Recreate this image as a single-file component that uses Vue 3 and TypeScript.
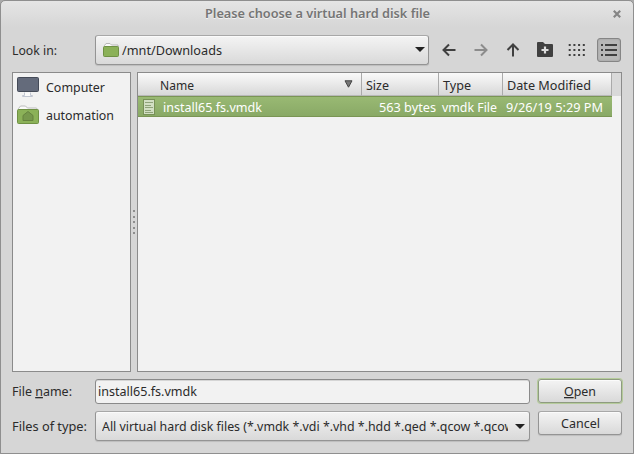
<script setup lang="ts">
import { h, ref } from 'vue'

interface LabelProps {
  text: string
  width: number
  // index of the underlined mnemonic letter
  mnemonic?: number
}

// Text label set to a fixed advance width
const Label = (props: LabelProps) => {
  const { text, width, mnemonic } = props
  const parts = mnemonic === undefined
    ? [text]
    : [
        text.slice(0, mnemonic),
        h('tspan', { 'text-decoration': 'underline' }, text[mnemonic]),
        text.slice(mnemonic + 1),
      ]
  return h('svg', { width, height: 14, overflow: 'visible', fill: 'currentColor', 'xml:space': 'preserve' }, [
    h('text', { x: 0, y: 12, textLength: width, lengthAdjust: 'spacingAndGlyphs' }, parts),
  ])
}
Label.props = ['text', 'width', 'mnemonic']

const fileName = ref('install65.fs.vmdk')
const dots = [0, 4.7, 9.4, 14.1]
</script>

<template>
  <main class="window">
    <header class="titlebar">
      <Label class="title" text="Please choose a virtual hard disk file" :width="225" />
      <svg class="close" width="10" height="10" viewBox="0 0 10 10"><path d="M1.800 1.800 8.200 8.200M8.200 1.800 1.800 8.200" /></svg>
    </header>

    <section class="lookin">
      <Label class="caption" text="Look in:" :width="45" />
      <button class="combo path">
        <svg width="18" height="16" viewBox="0 0 18 16">
          <path d="M2.500 6V3.500L4 1.500h4l1.500 1.500h6.500V5" fill="#fafafa" stroke="#b8b8b8" />
          <rect x="1.500" y="4.500" width="15" height="10" rx="1" fill="#8bb158" stroke="#6f9144" />
        </svg>
        <Label text="/mnt/Downloads" :width="100" />
        <i class="arrow"></i>
      </button>
      <nav class="tools">
        <svg class="glyph" width="24" height="24" viewBox="0 0 24 24"><path d="M18.500 12H6.500M12 6.500 6.500 12l5.500 5.500" /></svg>
        <svg class="glyph disabled" width="24" height="24" viewBox="0 0 24 24"><path d="M5.500 12h12M12 6.500 17.500 12l-5.500 5.500" /></svg>
        <svg class="glyph" width="24" height="24" viewBox="0 0 24 24"><path d="M12 18.500V6.500M6.500 12 12 6.500l5.500 5.500" /></svg>
        <svg width="24" height="24" viewBox="0 0 24 24">
          <path d="M4 5q0-1 1-1h5l2 2h7q1 0 1 1v11q0 1-1 1H5q-1 0-1-1z" fill="#404040" />
          <path d="M12 8.500v7M8.500 12h7" stroke="#dedede" stroke-width="2.200" />
        </svg>
        <svg width="24" height="24" viewBox="0 0 24 24" fill="#404040">
          <template v-for="y in [6, 11, 16]" :key="y">
            <rect v-for="x in dots" :key="x" :x="x + 3.700" :y="y" width="2" height="2" />
          </template>
        </svg>
        <span class="toggle">
          <svg width="18" height="18" viewBox="0 0 18 18" fill="#404040">
            <template v-for="y in [3, 8, 13]" :key="y">
              <rect x="1" :y="y" width="2" height="2" />
              <rect x="5" :y="y" width="12" height="2" />
            </template>
          </svg>
        </span>
      </nav>
    </section>

    <section class="browser">
      <aside class="places">
        <div class="place">
          <svg width="24" height="24" viewBox="0 0 24 24">
            <path d="M8.500 16.500v3h-2v1h10v-1h-2v-3" fill="#fafafa" stroke="#c2c7d2" />
            <rect x="1.500" y="1.500" width="21" height="14" rx="1" fill="#646b7b" stroke="#454b58" />
          </svg>
          <Label text="Computer" :width="59" />
        </div>
        <div class="place">
          <svg width="24" height="24" viewBox="0 0 24 24">
            <path d="M2.500 7V4.500L4.500 2h5l2 2h8.500q1 0 1 1v2" fill="#fafafa" stroke="#bcbcbc" />
            <rect x="1.500" y="5.500" width="21" height="14" rx="1" fill="#8bb158" stroke="#6f9144" />
            <path d="m12 7.500 5 4v5H7v-5z" fill="#77984d" stroke="#66833f" />
          </svg>
          <Label text="automation" :width="68" />
        </div>
      </aside>

      <div class="splitter"><i></i><i></i><i></i><i></i><i></i></div>

      <div class="files">
        <div class="head cols">
          <span class="cell name">
            <Label text="Name" :width="34" />
            <svg class="sort" width="9" height="8" viewBox="0 0 9 8"><path d="M1 .8h7L4.500 7.200z" fill="#777" stroke="#444" /></svg>
          </span>
          <span class="cell"><Label text="Size" :width="23" /></span>
          <span class="cell"><Label text="Type" :width="28" /></span>
          <span class="cell"><Label text="Date Modified" :width="84" /></span>
        </div>
        <div class="row cols">
          <span class="item">
            <svg width="13" height="16" viewBox="0 0 13 16">
              <rect x=".5" y=".5" width="11" height="15" fill="#d2dfc3" stroke="#789158" />
              <path d="M2 3.500h8M2 6.500h6M2 8.500h8M2 11.500h6M2 13.500h8" stroke="#8fa37a" />
            </svg>
            <Label text="install65.fs.vmdk" :width="99" />
          </span>
          <span class="size"><Label text="563 bytes" :width="57" /></span>
          <span class="value"><Label text="vmdk File" :width="55" /></span>
          <span class="value"><Label text="9/26/19 5:29 PM" :width="97" /></span>
        </div>
      </div>
    </section>

    <section class="form">
      <Label class="caption raised" text="File name:" :width="60" :mnemonic="5" />
      <div class="field"><Label :text="fileName" :width="99" /></div>
      <button class="push default"><Label text="Open" :width="32" :mnemonic="0" /></button>

      <Label class="caption" text="Files of type:" :width="75" />
      <button class="combo filter">
        <span class="clip">
          <Label text="All virtual hard disk files (*.vmdk *.vdi *.vhd *.hdd *.qed *.qcow *.qcow2)" :width="423" />
        </span>
        <i class="arrow"></i>
      </button>
      <button class="push"><Label text="Cancel" :width="39" /></button>
    </section>
  </main>
</template>

<style>
body {
  margin: 0;
  background: #aaa;
}
</style>

<style scoped>
.window {
  box-sizing: border-box;
  width: 634px;
  height: 454px;
  padding: 0 11px;
  overflow: hidden;
  border: 1px solid #8f8f8f;
  border-radius: 5px 5px 0 0;
  background: linear-gradient(#e5e5e5, #d6d6d6 26px);
  color: #2b2b2b;
  font: 13px "Noto Sans", sans-serif;
}
svg {
  display: block;
  flex: none;
}
.titlebar {
  display: flex;
  align-items: center;
  justify-content: center;
  height: 25px;
  position: relative;
  color: #757575;
  font-weight: 600;
}
.title {
  margin-bottom: 1px;
  text-shadow: 0 1px #f2f2f2;
}
.close {
  position: absolute;
  right: 0;
  top: 8px;
  fill: none;
  stroke: #858585;
  stroke-width: 2.2;
}
.lookin {
  display: flex;
  align-items: center;
  height: 31px;
  margin-top: 8px;
}
.combo,
.push {
  box-sizing: border-box;
  display: flex;
  align-items: center;
  margin: 0;
  border: 1px solid #949494;
  border-top-color: #a8a8a8;
  border-radius: 3px;
  background: linear-gradient(#f4f4f4, #d9d9d9);
  box-shadow: inset 0 1px #fbfbfb, 0 1px 1px #bdbdbd;
  color: inherit;
  font: inherit;
}
.combo {
  height: 30px;
  padding: 0 4px 0 6px;
}
.path {
  width: 334px;
  margin-left: 38px;
  gap: 2px;
}
.arrow {
  width: 0;
  height: 0;
  margin-left: auto;
  border: 5px solid transparent;
  border-top-color: #222;
  border-bottom: 0;
}
.path .arrow {
  margin-right: -1px;
}
.tools {
  display: flex;
  align-items: center;
  gap: 8px;
  margin-left: 8px;
}
.glyph {
  fill: none;
  stroke: #404040;
  stroke-width: 2;
}
.disabled {
  stroke: #8c8c8c;
}
.toggle {
  box-sizing: border-box;
  display: flex;
  align-items: center;
  justify-content: center;
  width: 24px;
  height: 24px;
  border: 1px solid #858585;
  border-radius: 3px;
  background: #b7b7b7;
  box-shadow: inset 0 0 2px #999;
}
.browser {
  display: flex;
  height: 300px;
  margin-top: 7px;
}
.places,
.files {
  box-sizing: border-box;
  border: 1px solid #8b8b8b;
  background: #f2f2f2;
}
.places {
  width: 119px;
  padding: 0 3px;
}
.place {
  display: flex;
  align-items: center;
  gap: 6px;
  height: 28px;
}
.place > svg:first-child {
  margin-top: 2px;
}
.splitter {
  display: flex;
  flex-direction: column;
  align-items: center;
  justify-content: center;
  gap: 3.5px;
  width: 6px;
}
.splitter i {
  width: 2px;
  height: 2px;
  background: #8e8e8e;
}
.files {
  width: 485px;
}
.cols {
  display: grid;
  grid-template-columns: 224px 77px 64px 109px;
}
.head {
  height: 23px;
  background: #d9d9d9;
}
.cell {
  box-sizing: border-box;
  display: flex;
  align-items: center;
  padding: 1px 0 0 4px;
  border-right: 1px solid #aaa;
  border-bottom: 1px solid #b8b8b8;
  background: linear-gradient(#fafafa, #d8d8d8);
}
.name {
  padding-left: 22px;
}
.sort {
  margin: -1px 8px 0 auto;
}
.row {
  box-sizing: border-box;
  width: 474px;
  height: 21px;
  border: solid #7a9554;
  border-width: 1px 0;
  background: linear-gradient(#99b973, #89a966);
  color: #fff;
  align-items: center;
}
.item {
  display: flex;
  align-items: center;
  gap: 7px;
  padding-left: 5px;
}
.size {
  display: flex;
  justify-content: flex-end;
  padding-right: 3px;
}
.value {
  padding-left: 3px;
}
.form {
  display: grid;
  grid-template-columns: 83px 435px 84px;
  grid-template-rows: 25px 30px;
  gap: 7px 0;
  margin-top: 7px;
  align-items: center;
}
.raised {
  margin-bottom: 1px;
}
.field {
  box-sizing: border-box;
  display: flex;
  align-items: center;
  height: 25px;
  padding: 0 0 1px 2px;
  border: 1px solid #8a8a8a;
  border-radius: 3px;
  background: #f2f2f2;
  box-shadow: inset 0 1px #d5d5d5;
}
.push {
  justify-content: center;
  width: 84px;
  height: 24px;
  margin-left: 8px;
  padding: 0;
  align-self: start;
}
.default {
  border-color: #8e9b80;
  box-shadow: inset 0 1px #fbfbfb, 0 0 0 1px #b5cb9b;
}
.clip {
  width: 406px;
  overflow: hidden;
  padding: 4px 0;
}
</style>
